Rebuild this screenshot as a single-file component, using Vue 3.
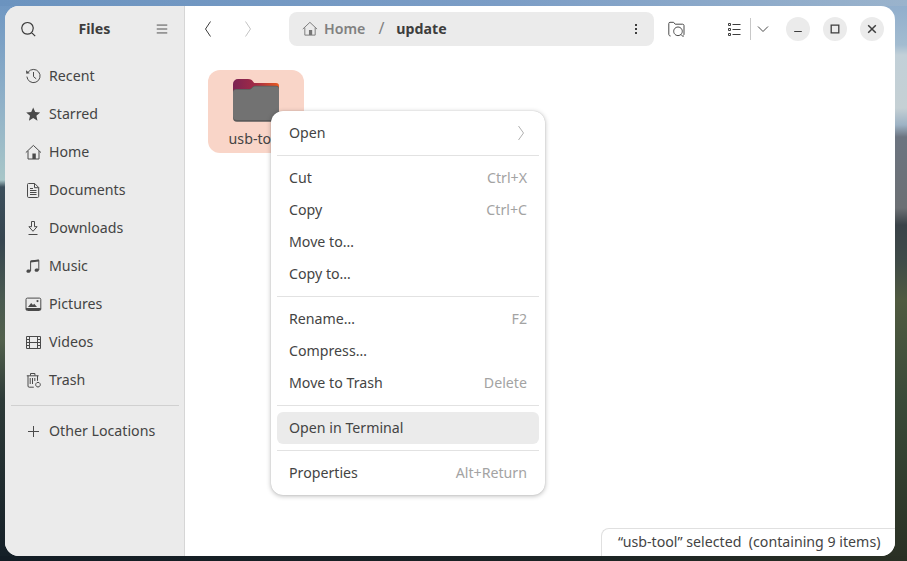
<script setup>
const places = [
  { label: 'Recent', s: 'M3.100 4.200A6.600 6.600 0 1 1 1.900 8.600M8.500 4v4.600l2.700 2.200', f: 'M1 2.200l.3 3.600 3.500-.6z' },
  { label: 'Starred', s: '', f: 'M8.200 1.400l2 4.600 5 .5-3.800 3.300 1.100 4.900-4.300-2.600-4.300 2.600 1.100-4.900L1.200 6.500l5-.5z' },
  { label: 'Home', s: 'M.8 8.600L8.400 1.400 16 8.600M3 7v8h11V7', f: 'M7.400 9.600h3.400V15H7.400z' },
  { label: 'Documents', s: 'M2.500 2.500a1 1 0 0 1 1-1h6.200l4 4v8.800a1.200 1.200 0 0 1-1.200 1.200h-8.800a1.200 1.200 0 0 1-1.200-1.200zM9.500 1.500v4.200h4.200M5 6.500h3M5 8.500h6.500M5 10.500h6.500M5 12.500h6.500', f: '' },
  { label: 'Downloads', s: 'M6.500 1.500h3v5.200h2.600L8 11.300 3.900 6.700h2.600zM3.500 14.500h9', f: '' },
  { label: 'Music', s: 'M5.600 13V3.200l8.200-1V12', f: 'M5.600 2.600l8.200-1v2l-8.200 1zM1.400 13.200c0-1 1-1.700 2.200-1.700s2.100.5 2.100 1.500-1 1.800-2.200 1.800-2.100-.6-2.100-1.600zM9.600 12.200c0-1 1-1.700 2.200-1.700s2.100.5 2.100 1.500-1 1.800-2.200 1.800-2.100-.6-2.100-1.600z' },
  { label: 'Pictures', s: 'M1 3.500a1.400 1.400 0 0 1 1.400-1.400h12a1.400 1.400 0 0 1 1.400 1.400v9.600a1.400 1.400 0 0 1-1.400 1.400h-12A1.400 1.400 0 0 1 1 13.100z', f: 'M1 12h14.800v2H1zM3 11l3.200-4 1.800 2 1.200-1.200L12 11zM12.500 4a1.100 1.100 0 1 1 0 2.200 1.100 1.100 0 0 1 0-2.200z' },
  { label: 'Videos', s: 'M1.500 2.500h14v12h-14zM4.500 2.500v12M12.500 2.500v12M4.500 8.500h8M1.500 5.500h3M1.500 8.500h3M1.500 11.500h3M12.500 5.500h3M12.500 8.500h3M12.500 11.500h3', f: '' },
  { label: 'Trash', s: 'M1.800 3.800h11.800M5.500 3.500V1.500h4.400v2M3 3.800v10.200a1.200 1.200 0 0 0 1.200 1.200h4.600M12.500 3.800v5M5.200 6v6M7.500 6v6M9.800 6v3M13 10.400a2.300 2.300 0 1 1-.01 0z', f: '' }
]

const menuGroups = [
  [{ label: 'Open', arrow: true }],
  [
    { label: 'Cut', key: 'Ctrl+X' },
    { label: 'Copy', key: 'Ctrl+C' },
    { label: 'Move to…' },
    { label: 'Copy to…' }
  ],
  [
    { label: 'Rename…', key: 'F2' },
    { label: 'Compress…' },
    { label: 'Move to Trash', key: 'Delete' }
  ],
  [{ label: 'Open in Terminal', active: true }],
  [{ label: 'Properties', key: 'Alt+Return' }]
]
</script>

<template>
  <div class="desk">
    <div class="window">
      <aside class="sidebar">
        <header class="side-head">
          <svg class="ico search" viewBox="0 0 16 16"><path d="M7.500 1.500a5.800 5.800 0 1 1-.01 0zM11.600 11.600l3.600 3.600" /></svg>
          <span class="title">Files</span>
          <svg class="ico burger" viewBox="0 0 16 16"><path d="M2 3.500h12M2 8h12M2 12.500h12" /></svg>
        </header>
        <nav class="places">
          <a v-for="p in places" :key="p.label" class="place">
            <svg class="ico" viewBox="0 0 17 17">
              <path v-if="p.s" :d="p.s" />
              <path v-if="p.f" class="solid" :d="p.f" />
            </svg>
            <span class="lift">{{ p.label }}</span>
          </a>
        </nav>
        <hr class="side-rule" />
        <a class="place">
          <svg class="ico" viewBox="0 0 17 17"><path d="M8.500 3v11M3 8.500h11" /></svg>
          <span class="lift">Other Locations</span>
        </a>
      </aside>

      <section class="main">
        <header class="toolbar">
          <svg class="chev back" viewBox="0 0 10 18"><path d="M7.500 1.500L2.500 9l5 7.500" /></svg>
          <svg class="chev forward" viewBox="0 0 10 18"><path d="M2.500 1.500L7.500 9l-5 7.500" /></svg>
          <div class="pathbar">
            <svg class="ico home" viewBox="0 0 17 17">
              <path d="M.8 8.600L8.400 1.400 16 8.600M3 7v8h11V7" />
              <path class="solid" d="M7.400 9.600h3.400V15H7.400z" />
            </svg>
            <span class="crumb lift">Home</span>
            <span class="slash lift">/</span>
            <span class="current lift">update</span>
            <span class="dots"><i></i><i></i><i></i></span>
          </div>
          <svg class="ico find" viewBox="0 0 17 17">
            <path d="M2.600 15C1.400 15 .8 14.200.8 13.200V2.500C.8 1.800 1.300 1.300 2 1.300h3.600l1.600 1.900h7.400c.8 0 1.400.5 1.400 1.300v8.700c0 .6-.2 1-.6 1.300M10 6a4.300 4.300 0 1 1-.01 0zM12.800 13.300l2.700 2.700" />
          </svg>
          <svg class="ico list" viewBox="0 0 13 13">
            <path d="M4.500 1.500h8M4.500 6.500h8M4.500 11.500h8" />
            <path class="box" d="M.5.500h2v2h-2zM.5 5.500h2v2h-2zM.5 10.500h2v2h-2z" />
          </svg>
          <span class="tool-rule"></span>
          <svg class="ico drop" viewBox="0 0 12 8"><path d="M1 1.500l5 5 5-5" /></svg>
          <div class="win-buttons">
            <button class="wbtn"><svg viewBox="0 0 12 12"><path d="M2.200 8.500h7.600" /></svg></button>
            <button class="wbtn"><svg viewBox="0 0 12 12"><path class="mid" d="M2.200 2.200h7.600v7.600H2.200z" /></svg></button>
            <button class="wbtn"><svg viewBox="0 0 12 12"><path class="thick" d="M2.200 2.200l7.600 7.600M9.800 2.200l-7.600 7.600" /></svg></button>
          </div>
        </header>

        <div class="files">
          <div class="item">
            <svg class="folder" viewBox="0 0 46 43">
              <defs>
                <linearGradient id="tabGrad" x1="0" y1="0" x2="1" y2="0">
                  <stop offset="0" stop-color="#7b2353" />
                  <stop offset=".5" stop-color="#a32a45" />
                  <stop offset="1" stop-color="#ea5a1f" />
                </linearGradient>
              </defs>
              <path fill="url(#tabGrad)" d="M0 5a5 5 0 0 1 5-5h10c3 0 4 1 5 2.500.5.900 1 1.500 2 1.500h21a3 3 0 0 1 3 3v12H0z" />
              <path fill="#5b5b5b" d="M0 13a3 3 0 0 1 3-3h12c2 0 3-.5 4-1.500 1.500-1.500 2.500-1.700 4-1.700h20a3 3 0 0 1 3 3v29a4 4 0 0 1-4 4H4a4 4 0 0 1-4-4z" />
              <path fill="#727272" d="M0 13.800a3 3 0 0 1 3-3h12c2 0 3-.5 4-1.500 1.500-1.500 2.500-1.700 4-1.700h20a3 3 0 0 1 3 3V37a4 4 0 0 1-4 4H4a4 4 0 0 1-4-4z" />
            </svg>
            <span class="item-name">usb-tool</span>
          </div>
        </div>
      </section>

      <div class="menu">
        <template v-for="(group, g) in menuGroups" :key="g">
          <hr v-if="g" class="menu-rule" />
          <div v-for="row in group" :key="row.label" class="menu-row" :class="{ active: row.active }">
            <span class="lift">{{ row.label }}</span>
            <span v-if="row.key" class="shortcut lift">{{ row.key }}</span>
            <svg v-if="row.arrow" class="chev sub" viewBox="0 0 8 16"><path d="M1.500 1L6.500 8l-5 7" /></svg>
          </div>
        </template>
      </div>

      <div class="status">“usb-tool” selected&nbsp; (containing 9 items)</div>
    </div>
  </div>
</template>

<style scoped>
.desk {
  width: 907px;
  height: 561px;
  box-sizing: border-box;
  padding: 6px 12px 5px 5px;
  overflow: hidden;
  font-family: "Noto Sans", "Open Sans", sans-serif;
  background:
    linear-gradient(to right, #6b93bf 0, #7b9dc6 55%, #9ab3cc 100%) left top / 100% 6px no-repeat,
    linear-gradient(to right, #131d25 0, #1a2224 60%, #2a3024 100%) left bottom / 100% 5px no-repeat,
    linear-gradient(to bottom, #6e96c2 0, #8fb0c8 100px, #a8c6c8 180px, #3c4f5c 187px, #36454f 240px, #4a5a50 300px, #52604c 340px, #2d3a38 400px, #141f27 561px) left top / 50% 100% no-repeat,
    linear-gradient(to bottom, #8eaccc 0, #a3bcd0 45px, #c2d0d8 55px, #c5d0d4 108px, #9db2c4 125px, #6c7480 137px, #6c7074 208px, #3a4248 225px, #3f4a48 260px, #505a40 300px, #3a4a38 400px, #2a3024 561px) right top / 50% 100% no-repeat;
}
.window {
  position: relative;
  display: flex;
  height: 100%;
  border-radius: 14px;
  overflow: hidden;
  background: #fff;
  color: #3d3d3d;
  font-size: 14.2px;
}
.lift {
  margin-bottom: 2px;
}
.ico {
  flex: none;
  width: 17px;
  height: 17px;
  fill: none;
  stroke: #4a4a4a;
  stroke-width: 1;
}
.ico .solid {
  fill: #4a4a4a;
  stroke: none;
}
.sidebar {
  flex: none;
  box-sizing: border-box;
  width: 180px;
  background: #ebebeb;
  border-right: 1px solid #d6d6d6;
}
.side-head {
  display: flex;
  align-items: center;
  height: 46px;
  padding: 0 15px;
}
.search {
  width: 16px;
  height: 16px;
  stroke-width: 1.200;
  stroke: #3d3d3d;
}
.burger {
  width: 14px;
  height: 14px;
  stroke: #3d3d3d;
  margin-top: -1px;
}
.title {
  flex: 1;
  text-align: center;
  font-weight: 700;
  padding-right: 2px;
  margin-bottom: 2px;
}
.places {
  padding-top: 5px;
}
.place {
  display: flex;
  align-items: center;
  gap: 7px;
  height: 38px;
  padding-left: 20px;
  color: #444;
}
.side-rule {
  margin: 6px 5px 6px 6px;
  border: 0;
  border-top: 1px solid #d0d0d0;
}
.main {
  flex: 1;
  min-width: 0;
}
.toolbar {
  display: flex;
  align-items: center;
  height: 46px;
}
.chev {
  flex: none;
  width: 10px;
  height: 18px;
  fill: none;
  stroke: #3d3d3d;
  stroke-width: 1;
}
.back {
  margin-left: 18px;
}
.forward {
  margin-left: 30px;
  stroke: #c4c4c4;
}
.pathbar {
  display: flex;
  align-items: center;
  box-sizing: border-box;
  width: 365px;
  height: 34px;
  margin-left: 36px;
  padding: 0 13px;
  background: #ebebeb;
  border-radius: 8px;
  font-weight: 600;
}
.home {
  width: 16px;
  height: 16px;
  stroke: #777;
}
.home .solid {
  fill: #777;
}
.crumb {
  margin-left: 6px;
  color: #808080;
}
.slash {
  margin-left: 13px;
  font-size: 16px;
  font-weight: 400;
  color: #808080;
}
.current {
  margin-left: 12px;
  font-weight: 700;
}
.dots {
  display: flex;
  flex-direction: column;
  gap: 2px;
  margin-left: auto;
  margin-right: 4px;
}
.dots i {
  width: 2px;
  height: 2px;
  background: #3d3d3d;
}
.find {
  margin-left: 14px;
}
.list {
  width: 13px;
  height: 13px;
  margin-left: 43px;
  stroke: #3d3d3d;
}
.tool-rule {
  width: 1px;
  height: 22px;
  margin-left: 9px;
  background: #c8c8c8;
}
.drop {
  width: 12px;
  height: 8px;
  margin-left: 6px;
}
.win-buttons {
  display: flex;
  gap: 13px;
  margin-left: 17px;
}
.wbtn {
  display: flex;
  align-items: center;
  justify-content: center;
  width: 24px;
  height: 24px;
  padding: 0;
  border: 0;
  border-radius: 50%;
  background: #ebebeb;
}
.wbtn svg {
  width: 12px;
  height: 12px;
  fill: none;
  stroke: #3d3d3d;
  stroke-width: 1;
}
.wbtn .mid {
  stroke-width: 1.300;
}
.wbtn .thick {
  stroke-width: 1.500;
}
.files {
  padding: 18px 23px;
}
.item {
  display: flex;
  flex-direction: column;
  align-items: center;
  box-sizing: border-box;
  width: 96px;
  height: 83px;
  padding-top: 9px;
  border-radius: 12px;
  background: #f9d5c8;
}
.folder {
  width: 46px;
  height: 43px;
}
.item-name {
  margin-top: 7px;
  line-height: 20px;
  color: #444;
}
.menu {
  position: absolute;
  left: 266px;
  top: 105px;
  box-sizing: border-box;
  width: 274px;
  padding: 6px;
  border-radius: 12px;
  background: #fff;
  box-shadow: 0 1px 5px rgba(0, 0, 0, 0.28), 0 0 1px rgba(0, 0, 0, 0.2);
  color: #444;
}
.menu-row {
  display: flex;
  align-items: center;
  justify-content: space-between;
  height: 32px;
  padding: 0 12px;
  border-radius: 6px;
}
.menu-row.active {
  background: #ebebeb;
}
.shortcut {
  color: #a3a3a3;
}
.sub {
  width: 8px;
  height: 16px;
  margin-right: 2px;
  stroke: #b0b0b0;
}
.menu-rule {
  margin: 6px 0;
  border: 0;
  border-top: 1px solid #e2e2e2;
}
.status {
  position: absolute;
  right: 0;
  bottom: 0;
  box-sizing: border-box;
  width: 294px;
  height: 28px;
  padding-left: 16px;
  border: 1px solid #e0e0e0;
  border-width: 1px 0 0 1px;
  border-top-left-radius: 8px;
  background: #fff;
  line-height: 26px;
  color: #444;
  white-space: nowrap;
}
</style>
